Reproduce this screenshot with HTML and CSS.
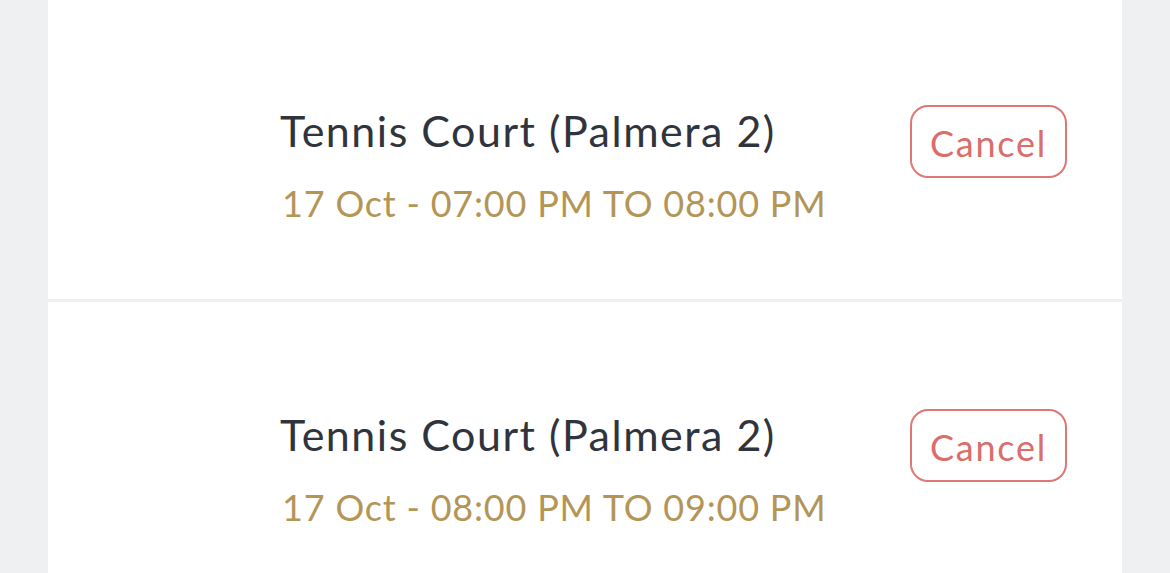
FILE: index.html
```html
<!DOCTYPE html>
<html>
<head>
<meta charset="utf-8">
<link rel="stylesheet" href="styles.css">
</head>
<body>
<div class="card">
  <div class="booking">
    <div class="info">
      <div class="title">Tennis Court (Palmera 2)</div>
      <div class="time">17 Oct - 07:00 PM TO 08:00 PM</div>
    </div>
    <button class="cancel">Cancel</button>
  </div>
  <div class="booking">
    <div class="info">
      <div class="title">Tennis Court (Palmera 2)</div>
      <div class="time">17 Oct - 08:00 PM TO 09:00 PM</div>
    </div>
    <button class="cancel">Cancel</button>
  </div>
</div>
</body>
</html>
```

FILE: styles.css
```css
html, body {
  margin: 0;
  padding: 0;
  height: 100%;
  overflow: hidden;
}
body {
  background: #eff0f2;
  font-family: Lato, "Open Sans", sans-serif;
}
.card {
  margin: 0 48px;
  background: #ffffff;
  min-height: 620px;
}
.booking {
  display: flex;
  align-items: flex-start;
  height: 302px;
  box-sizing: border-box;
  padding: 105px 55px 0 232px;
  border-bottom: 3px solid #efefef;
}
.booking + .booking {
  padding-top: 107px;
}
.info {
  flex: 1;
  display: flex;
  flex-direction: column;
  gap: 25px;
}
.title {
  font-size: 43px;
  line-height: 1.2;
  letter-spacing: 1.5px;
  color: #30343c;
}
.time {
  font-size: 36px;
  line-height: 1.2;
  letter-spacing: 0.8px;
  color: #b39558;
  padding-left: 2px;
}
.cancel {
  width: 157px;
  height: 73px;
  box-sizing: border-box;
  border: 2px solid #de7874;
  border-radius: 18px;
  background: #ffffff;
  color: #d96e6a;
  font-family: inherit;
  font-size: 36px;
  letter-spacing: 1.8px;
  padding: 2px 0 0;
  display: flex;
  align-items: center;
  justify-content: center;
}
```
